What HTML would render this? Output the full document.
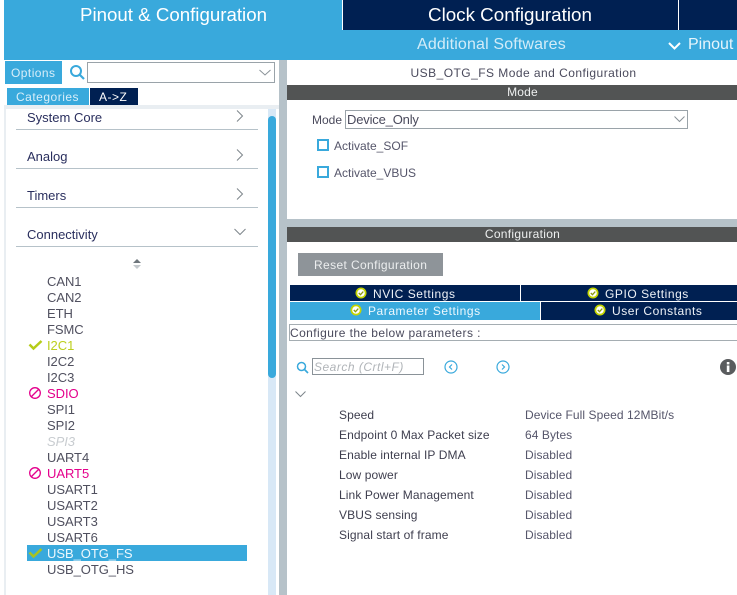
<!DOCTYPE html>
<html><head><meta charset="utf-8"><style>
html,body{margin:0;padding:0;background:#fff;width:737px;height:595px;overflow:hidden}
body{position:relative;font-family:"Liberation Sans",sans-serif;color:#3c3c50}
div,span.t,svg{position:absolute}
.t{white-space:nowrap;font-size:12px;line-height:16px;height:16px}
.c{text-align:center}
.cat{font-size:13px;color:#2a2f5e;left:27px}
.hr{left:16px;width:242px;height:1px;background:#b6c2c9}
.pin{left:47px;font-size:13px;color:#50505f;line-height:16px;letter-spacing:-.05px}
.p{left:339px;color:#3e3e4e;letter-spacing:.1px}
.v{left:525px;color:#55556a;letter-spacing:.07px}
</style></head><body>
<div style="left:4px;top:0;width:733px;height:60px;background:#39a9dc"></div>
<div style="left:342px;top:0;width:395px;height:30px;background:#002052"></div>
<div style="left:342px;top:0;width:1px;height:30px;background:#fff"></div>
<div style="left:678px;top:0;width:1px;height:30px;background:#fff"></div>
<div class="t" style="left:80px;top:5px;font-size:18.7px;line-height:20px;height:20px;color:#fff">Pinout &amp; Configuration</div>
<div class="t" style="left:428px;top:5px;font-size:18.8px;line-height:20px;height:20px;color:#fff">Clock Configuration</div>
<div class="t" style="left:417px;top:36px;font-size:16px;line-height:18px;height:18px;color:#d3ecf8;letter-spacing:.15px">Additional Softwares</div>
<svg style="left:667px;top:40px" width="15" height="12" viewBox="0 0 15 12"><path d="M2 3l5.500 5.500L13 3" fill="none" stroke="#fff" stroke-width="2"/></svg>
<div class="t" style="left:688px;top:36px;font-size:16px;line-height:18px;height:18px;color:#e6f5fc">Pinout</div>

<!-- left toolbar -->
<div style="left:5px;top:61px;width:57px;height:23px;background:#39a9dc"></div>
<div class="t" style="left:11px;top:65px;color:#d8eef9;letter-spacing:.45px">Options</div>
<svg style="left:69px;top:64px" width="17" height="17" viewBox="0 0 17 17"><circle cx="7" cy="7" r="5" fill="none" stroke="#39a9dc" stroke-width="2"/><path d="M10.500 10.500L15 15" stroke="#39a9dc" stroke-width="2.200"/></svg>
<div style="left:87px;top:62px;width:186px;height:19px;border:1px solid #9aa3a9;background:#fff"></div>
<svg style="left:258px;top:68px" width="14" height="9" viewBox="0 0 14 9"><path d="M1.500 2l5.500 5 5.500-5" fill="none" stroke="#8a9298" stroke-width="1"/></svg>
<div style="left:7px;top:88px;width:82px;height:17px;background:#39a9dc"></div>
<div class="t" style="left:16px;top:89px;color:#d8eef9;letter-spacing:.5px">Categories</div>
<div style="left:90px;top:88px;width:48px;height:17px;background:#002052"></div>
<div class="t" style="left:99px;top:89px;color:#fff;letter-spacing:.5px">A-&gt;Z</div>

<!-- left panel -->
<div style="left:4px;top:105px;width:275px;height:4px;background:#e9eef2"></div>
<div style="left:4px;top:105px;width:2px;height:490px;background:#e9eef2"></div>
<div style="left:268px;top:109px;width:8px;height:486px;background:#d8e8f6"></div>
<div style="left:268px;top:116px;width:8px;height:262px;background:#39a9dc;border-radius:4px"></div>
<div style="left:279px;top:60px;width:8px;height:535px;background:#b6c2c9"></div>

<div class="t cat" style="top:110px">System Core</div>
<svg style="left:235px;top:109px" width="10" height="14" viewBox="0 0 10 14"><path d="M2 1.500l5.500 5.500L2 12.500" fill="none" stroke="#7d858b" stroke-width="1"/></svg>
<div class="hr" style="top:129px"></div>
<div class="t cat" style="top:149px">Analog</div>
<svg style="left:235px;top:148px" width="10" height="14" viewBox="0 0 10 14"><path d="M2 1.500l5.500 5.500L2 12.500" fill="none" stroke="#7d858b" stroke-width="1"/></svg>
<div class="hr" style="top:168px"></div>
<div class="t cat" style="top:188px">Timers</div>
<svg style="left:235px;top:187px" width="10" height="14" viewBox="0 0 10 14"><path d="M2 1.500l5.500 5.500L2 12.500" fill="none" stroke="#7d858b" stroke-width="1"/></svg>
<div class="hr" style="top:207px"></div>
<div class="t cat" style="top:227px">Connectivity</div>
<svg style="left:233px;top:227px" width="14" height="10" viewBox="0 0 14 10"><path d="M1.500 2l5.500 5.500L12.500 2" fill="none" stroke="#7d858b" stroke-width="1"/></svg>
<div class="hr" style="top:246px"></div>
<svg style="left:132px;top:258px" width="10" height="12" viewBox="0 0 10 12"><path d="M5 1L9 5H1z" fill="#6e767c"/><path d="M5 11L9 7H1z" fill="#c4c9cd"/></svg>

<div style="left:27px;top:545px;width:220px;height:16px;background:#39a9dc"></div>
<div class="t pin" style="top:274px">CAN1</div>
<div class="t pin" style="top:290px">CAN2</div>
<div class="t pin" style="top:306px">ETH</div>
<div class="t pin" style="top:322px">FSMC</div>
<div class="t pin" style="top:338px;color:#bccf1e">I2C1</div>
<div class="t pin" style="top:354px">I2C2</div>
<div class="t pin" style="top:370px">I2C3</div>
<div class="t pin" style="top:386px;color:#e4008c">SDIO</div>
<div class="t pin" style="top:402px">SPI1</div>
<div class="t pin" style="top:418px">SPI2</div>
<div class="t pin" style="top:434px;color:#c8ccd0;font-style:italic">SPI3</div>
<div class="t pin" style="top:450px">UART4</div>
<div class="t pin" style="top:466px;color:#e4008c">UART5</div>
<div class="t pin" style="top:482px">USART1</div>
<div class="t pin" style="top:498px">USART2</div>
<div class="t pin" style="top:514px">USART3</div>
<div class="t pin" style="top:530px">USART6</div>
<div class="t pin" style="top:546px;color:#eef8fd">USB_OTG_FS</div>
<div class="t pin" style="top:562px">USB_OTG_HS</div>
<svg style="left:28px;top:338px" width="15" height="13" viewBox="0 0 15 13"><path d="M1.500 6.500l4 4L13.500 3" fill="none" stroke="#b5cc18" stroke-width="2.500"/></svg>
<svg style="left:28px;top:546px" width="15" height="13" viewBox="0 0 15 13"><path d="M1.500 6.500l4 4L13.500 3" fill="none" stroke="#a9c320" stroke-width="2.500"/></svg>
<svg style="left:28px;top:386px" width="14" height="14" viewBox="0 0 14 14"><circle cx="7" cy="7" r="5.300" fill="none" stroke="#e4008c" stroke-width="1.300"/><path d="M3.500 10.500l7-7" stroke="#e4008c" stroke-width="1.300"/></svg>
<svg style="left:28px;top:466px" width="14" height="14" viewBox="0 0 14 14"><circle cx="7" cy="7" r="5.300" fill="none" stroke="#e4008c" stroke-width="1.300"/><path d="M3.500 10.500l7-7" stroke="#e4008c" stroke-width="1.300"/></svg>

<!-- mode section -->
<div class="t c" style="left:287px;width:473px;top:65px;color:#4a4a5c;letter-spacing:.46px">USB_OTG_FS Mode and Configuration</div>
<div style="left:287px;top:85px;width:450px;height:15px;background:#525454"></div>
<div class="t c" style="left:287px;width:471px;top:85px;height:15px;line-height:15px;color:#eef0f0;letter-spacing:.2px">Mode</div>
<div class="t" style="left:312px;top:112px;color:#4a4a5c">Mode</div>
<div style="left:345px;top:110px;width:341px;height:17px;border:1px solid #9aa3a9;background:#fff"></div>
<div class="t" style="left:347px;top:112px;font-size:13px;color:#4a4a5c;letter-spacing:-.18px">Device_Only</div>
<svg style="left:673px;top:115px" width="13" height="9" viewBox="0 0 13 9"><path d="M1.500 1.500l5 5 5-5" fill="none" stroke="#8a9298" stroke-width="1"/></svg>
<div style="left:317px;top:139px;width:8px;height:8px;border:2px solid #39a9dc"></div>
<div class="t" style="left:334px;top:138px;color:#55556a">Activate_SOF</div>
<div style="left:317px;top:166px;width:8px;height:8px;border:2px solid #39a9dc"></div>
<div class="t" style="left:334px;top:165px;color:#55556a">Activate_VBUS</div>

<!-- configuration -->
<div style="left:287px;top:219px;width:450px;height:8px;background:#b6c2c9"></div>
<div style="left:287px;top:227px;width:450px;height:15px;background:#525454"></div>
<div class="t c" style="left:287px;width:471px;top:227px;height:15px;line-height:15px;color:#eef0f0;letter-spacing:.3px">Configuration</div>
<div style="left:298px;top:253px;width:145px;height:23px;background:#8e9499"></div>
<div class="t" style="left:314px;top:257px;color:#eceeef;letter-spacing:.38px">Reset Configuration</div>

<div style="left:290px;top:285px;width:230px;height:16px;background:#002052"></div>
<div style="left:521px;top:285px;width:216px;height:16px;background:#002052"></div>
<div style="left:290px;top:302px;width:250px;height:18px;background:#39a9dc"></div>
<div style="left:541px;top:302px;width:196px;height:18px;background:#002052"></div>
<div class="t" style="left:373px;top:286px;color:#eef2f7;letter-spacing:.55px">NVIC Settings</div>
<div class="t" style="left:605px;top:286px;color:#eef2f7;letter-spacing:.55px">GPIO Settings</div>
<div class="t" style="left:368px;top:303px;color:#eef8fd;letter-spacing:.55px">Parameter Settings</div>
<div class="t" style="left:612px;top:303px;color:#eef2f7;letter-spacing:.55px">User Constants</div>
<svg style="left:355px;top:287px" width="12" height="12" viewBox="0 0 12 12"><circle cx="6" cy="6" r="5.500" fill="#c4d600"/><circle cx="6" cy="6" r="3.800" fill="#fff"/><path d="M3.800 6l1.700 1.700L8.300 4.600" fill="none" stroke="#8a9a10" stroke-width="1.300"/></svg>
<svg style="left:587px;top:287px" width="12" height="12" viewBox="0 0 12 12"><circle cx="6" cy="6" r="5.500" fill="#c4d600"/><circle cx="6" cy="6" r="3.800" fill="#fff"/><path d="M3.800 6l1.700 1.700L8.300 4.600" fill="none" stroke="#8a9a10" stroke-width="1.300"/></svg>
<svg style="left:350px;top:304px" width="12" height="12" viewBox="0 0 12 12"><circle cx="6" cy="6" r="5.500" fill="#c4d600"/><circle cx="6" cy="6" r="3.800" fill="#fff"/><path d="M3.800 6l1.700 1.700L8.300 4.600" fill="none" stroke="#8a9a10" stroke-width="1.300"/></svg>
<svg style="left:594px;top:304px" width="12" height="12" viewBox="0 0 12 12"><circle cx="6" cy="6" r="5.500" fill="#c4d600"/><circle cx="6" cy="6" r="3.800" fill="#fff"/><path d="M3.800 6l1.700 1.700L8.300 4.600" fill="none" stroke="#8a9a10" stroke-width="1.300"/></svg>

<div style="left:289px;top:324px;width:448px;height:15px;border:1px solid #a5adb2;border-right:0;background:#fff"></div>
<div class="t" style="left:290px;top:325px;color:#4a4a5c;letter-spacing:.42px">Configure the below parameters :</div>

<svg style="left:296px;top:361px" width="13" height="13" viewBox="0 0 13 13"><circle cx="5.500" cy="5.500" r="4" fill="none" stroke="#39a9dc" stroke-width="1.500"/><path d="M8.500 8.500L12 12" stroke="#39a9dc" stroke-width="1.700"/></svg>
<div style="left:312px;top:358px;width:110px;height:15px;border:1px solid #8a9298"></div>
<div class="t" style="left:314px;top:359px;color:#b0b4b8;font-style:italic;letter-spacing:.5px">Search (Crtl+F)</div>
<svg style="left:444px;top:360px" width="14" height="14" viewBox="0 0 14 14"><circle cx="7" cy="7" r="6" fill="none" stroke="#39a9dc" stroke-width="1.200"/><path d="M8 4.500L5.500 7 8 9.500" fill="none" stroke="#39a9dc" stroke-width="1.200"/></svg>
<svg style="left:496px;top:360px" width="14" height="14" viewBox="0 0 14 14"><circle cx="7" cy="7" r="6" fill="none" stroke="#39a9dc" stroke-width="1.200"/><path d="M6 4.500L8.500 7 6 9.500" fill="none" stroke="#39a9dc" stroke-width="1.200"/></svg>
<svg style="left:720px;top:359px" width="16" height="16" viewBox="0 0 16 16"><circle cx="8" cy="8" r="8" fill="#5a5c5e"/><rect x="6.800" y="6.500" width="2.600" height="6.500" fill="#fff"/><rect x="6.800" y="3" width="2.600" height="2.400" fill="#fff"/></svg>
<svg style="left:294px;top:390px" width="13" height="9" viewBox="0 0 13 9"><path d="M1.500 1.500l5 5 5-5" fill="none" stroke="#7d858b" stroke-width="1"/></svg>

<div class="t p" style="top:407px">Speed</div><div class="t v" style="top:407px">Device Full Speed 12MBit/s</div>
<div class="t p" style="top:427px">Endpoint 0 Max Packet size</div><div class="t v" style="top:427px">64 Bytes</div>
<div class="t p" style="top:447px">Enable internal IP DMA</div><div class="t v" style="top:447px">Disabled</div>
<div class="t p" style="top:467px">Low power</div><div class="t v" style="top:467px">Disabled</div>
<div class="t p" style="top:487px">Link Power Management</div><div class="t v" style="top:487px">Disabled</div>
<div class="t p" style="top:507px">VBUS sensing</div><div class="t v" style="top:507px">Disabled</div>
<div class="t p" style="top:527px">Signal start of frame</div><div class="t v" style="top:527px">Disabled</div>
</body></html>
